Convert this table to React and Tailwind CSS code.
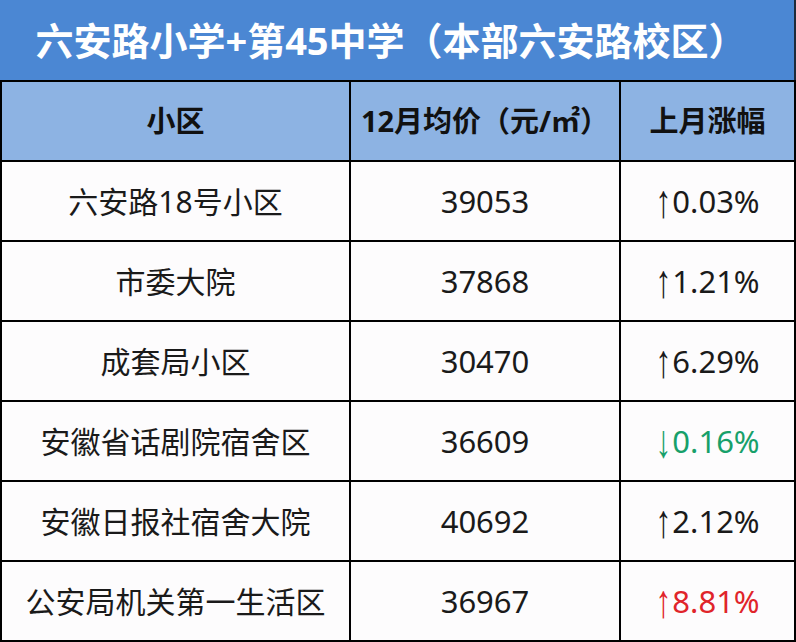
import React from "react";

const rows = [
  { name: "六安路18号小区", price: "39053", arrow: "↑", change: "0.03%", color: "text-[#1a1a1a]" },
  { name: "市委大院", price: "37868", arrow: "↑", change: "1.21%", color: "text-[#1a1a1a]" },
  { name: "成套局小区", price: "30470", arrow: "↑", change: "6.29%", color: "text-[#1a1a1a]" },
  { name: "安徽省话剧院宿舍区", price: "36609", arrow: "↓", change: "0.16%", color: "text-[#17a06a]" },
  { name: "安徽日报社宿舍大院", price: "40692", arrow: "↑", change: "2.12%", color: "text-[#1a1a1a]" },
  { name: "公安局机关第一生活区", price: "36967", arrow: "↑", change: "8.81%", color: "text-[#e0242a]" },
];

export default function App() {
  return (
    <div className="w-[796px] h-[642px] bg-white flex flex-col font-['Noto_Sans','Noto_Sans_CJK_SC',sans-serif]">
      <div className="h-[80px] bg-[#4b87d3] border-r-2 border-[#1e2a3a] flex items-center justify-center pr-[12px]">
        <span className="text-white font-bold text-[38px] leading-none">
          六安路小学+第45中学（本部六安路校区）
        </span>
      </div>
      <div className="flex flex-col border-l-2 border-r-2 border-b-2 border-black">
        <div className="h-[80px] flex border-t-2 border-black bg-[#8db3e3] text-[#111] font-bold text-[29px]">
          <div className="w-[347px] flex items-center justify-center">小区</div>
          <div className="w-[270px] border-l-2 border-black flex items-center justify-center">
            12月均价（元/㎡）
          </div>
          <div className="flex-1 border-l-2 border-black flex items-center justify-center">上月涨幅</div>
        </div>
        {rows.map((r) => (
          <div key={r.name} className="h-[80px] flex border-t-2 border-black bg-[#fdfcfd] text-[#1a1a1a] text-[30px]">
            <div className="w-[347px] flex items-center justify-center">{r.name}</div>
            <div className="w-[270px] border-l-2 border-black flex items-center justify-center text-[31px]">
              {r.price}
            </div>
            <div className={`flex-1 border-l-2 border-black flex items-center justify-center text-[31px] ${r.color}`}>
              <span className="inline-block font-['Liberation_Sans',sans-serif] text-[32px] scale-y-[1.45] mr-[1px]">
                {r.arrow}
              </span>
              <span>{r.change}</span>
            </div>
          </div>
        ))}
      </div>
    </div>
  );
}
